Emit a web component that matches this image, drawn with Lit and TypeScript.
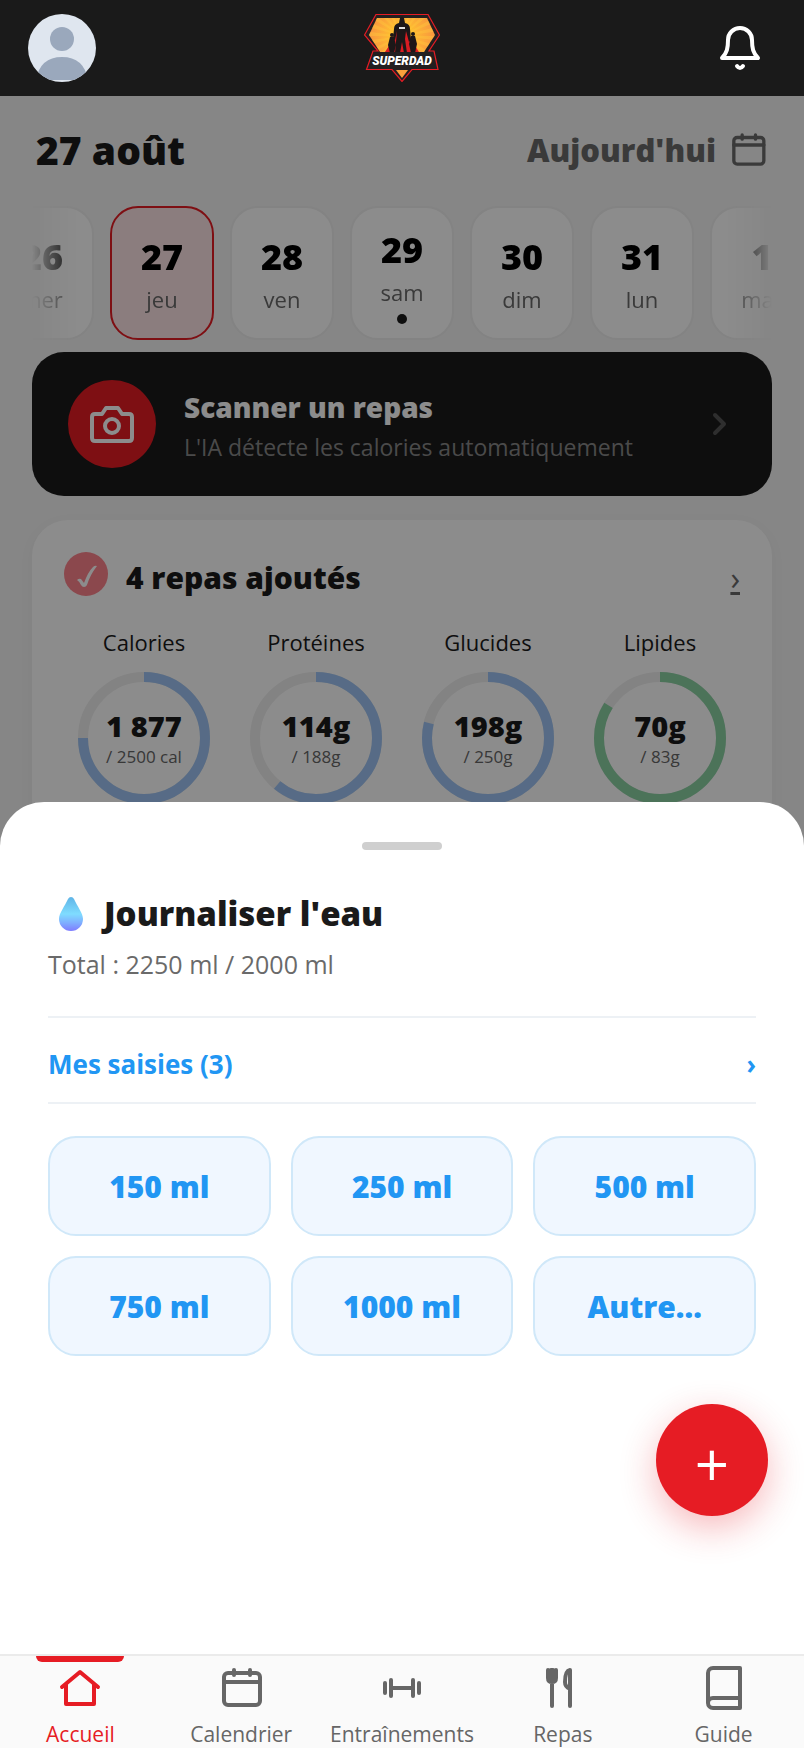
import { css, html, LitElement, svg } from "lit";
import { customElement, property, state } from "lit/decorators.js";
import { classMap } from "lit/directives/class-map.js";

const icons = {
    home: svg`<path d="M6 23 24 8l18 15M10 20v20h28V20" />`,
    calendar: svg`<rect x="7" y="9" width="36" height="32" rx="4" /><path d="M7 18h36M17 6v5M33 6v5" />`,
    dumbbell: svg`<path d="M7 19v10M13 16v16M13 24h22M35 16v16M41 19v10" />`,
    cutlery: svg`<path d="M9 6v8q0 4 4 4t4-4V6M13 6v36M12 6v8M14 6v8" /><path d="M31 42V6q-5 1-5 12 0 5 5 7" />`,
    book: svg`<path d="M40 4H13a5 5 0 0 0-5 5v30a5 5 0 0 0 5 5h27zM8 39a5 5 0 0 1 5-5h27" />`,
    bell: svg`<path d="M6 34c5-5 6-10 6-18a12 12 0 0 1 24 0c0 8 1 13 6 18z" /><path d="M21 42q3 4 6 0" />`,
    camera: svg`<path d="M7 14h7l4-6h12l4 6h7q3 0 3 3v21q0 3-3 3H7q-3 0-3-3V17q0-3 3-3z" /><circle cx="24" cy="26" r="7" />`,
};

@customElement("app-icon")
class AppIconElement extends LitElement {
    @property()
    name: keyof typeof icons = "home";

    render() {
        return html`<svg viewBox="0 0 48 48" aria-hidden="true">${icons[this.name]}</svg>`;
    }

    static styles = css`
      :host {
        display: inline-flex;
        width: 48px;
        height: 48px;
      }
      svg {
        width: 100%;
        height: 100%;
        fill: none;
        stroke: currentColor;
        stroke-width: 4;
        stroke-linecap: round;
        stroke-linejoin: round;
      }
    `;
}

@customElement("superdad-logo")
class SuperdadLogoElement extends LitElement {
    render() {
        const rays = Array.from({ length: 24 }, (_, i) => {
            const a = (i * Math.PI) / 12;
            const b = a + Math.PI / 24;
            return `M38 22L${38 + 50 * Math.cos(a)} ${22 + 50 * Math.sin(a)}L${38 + 50 * Math.cos(b)} ${22 + 50 * Math.sin(b)}z`;
        }).join("");
        return html`
      <svg viewBox="0 0 76 68" role="img" aria-label="Superdad">
        <defs>
          <radialGradient id="sun" cx="38" cy="22" r="34" gradientUnits="userSpaceOnUse">
            <stop offset="0" stop-color="#ffd21f" />
            <stop offset="0.5" stop-color="#fdb236" />
            <stop offset="1" stop-color="#f7943f" />
          </radialGradient>
          <clipPath id="gem"><path d="M13 4h50l8 17-13 20H18L5 21z" /></clipPath>
        </defs>
        <path
          d="M12 .5h52L75.500 21 65 37h5l4 18.500H48L38 67.500 28 55.500H2.500L9 37h5L.5 21z"
          fill="#231f20" stroke="#e61c24" stroke-width="1.200"
        />
        <path d="M13 4h50l8 17-13 20H18L5 21z" fill="url(#sun)" />
        <path d=${rays} fill="#ffc83d" opacity="0.4" clip-path="url(#gem)" />
        <path d="M33 11q-2 13-12 27h34Q45 24 43 11z" fill="#d91c22" />
        <path d="M36 4q2-3 4 0l1 5q5 1 5 6l1 11-2 2-3-11-1 8 2 14h-3l-2-11-2 11h-5l2-22-2 9-2-1 1-10q0-5 5-6z" fill="#1c1718" />
        <path d="M35 13h6v2h-6z" fill="#ddd" />
        <circle cx="28" cy="21" r="2" fill="#1c1718" />
        <path d="M26 23h4l2 8-2 8h-4l-2-8z" fill="#1c1718" />
        <circle cx="49" cy="20" r="2" fill="#1c1718" />
        <path d="M47 22h4l2 8-2 9h-4l-2-9z" fill="#1c1718" />
        <path d="M10 38h57l4 16H5z" fill="#231f20" />
        <path d="M32 56h12l-6 8z" fill="#f9a13c" />
        <text class="word" x="38" y="51" text-anchor="middle">SUPERDAD</text>
      </svg>`;
    }

    static styles = css`
      :host {
        display: inline-flex;
        width: 76px;
        height: 68px;
      }
      svg {
        width: 100%;
        height: 100%;
      }
      .word {
        font: italic 900 12px Roboto, sans-serif;
        fill: #fff;
      }
    `;
}

@customElement("macro-ring")
class MacroRingElement extends LitElement {
    @property()
    label = "";

    @property()
    value = "";

    @property()
    goal = "";

    @property({ type: Number })
    percent = 0;

    @property()
    color = "#9ec4f4";

    render() {
        return html`
      <span class="label">${this.label}</span>
      <div class="ring">
        <svg viewBox="0 0 132 132" aria-hidden="true">
          <circle cx="66" cy="66" r="61" stroke="#eee" />
          <circle
            cx="66" cy="66" r="61" pathLength="100" stroke=${this.color}
            stroke-dasharray="${this.percent} 100" transform="rotate(-90 66 66)"
          />
        </svg>
        <div class="center">
          <strong>${this.value}</strong>
          <small>/ ${this.goal}</small>
        </div>
      </div>`;
    }

    static styles = css`
      :host {
        display: flex;
        flex-direction: column;
        align-items: center;
        gap: 14px;
      }
      .label {
        font-size: 22px;
        line-height: 32px;
      }
      .ring {
        display: grid;
        place-items: center;
        width: 132px;
        height: 132px;
      }
      .ring > * {
        grid-area: 1 / 1;
      }
      svg {
        width: 100%;
        height: 100%;
        fill: none;
        stroke-width: 10;
      }
      .center {
        display: flex;
        flex-direction: column;
        align-items: center;
      }
      strong {
        font-size: 29px;
        font-weight: 800;
        line-height: 38px;
      }
      small {
        color: #666;
        font-size: 17px;
        line-height: 24px;
      }
    `;
}

@customElement("app-root")
class AppRootElement extends LitElement {
    @state()
    selected = 27;

    days = [
        { num: 26, name: "mer" },
        { num: 27, name: "jeu" },
        { num: 28, name: "ven" },
        { num: 29, name: "sam", dot: true },
        { num: 30, name: "dim" },
        { num: 31, name: "lun" },
        { num: 1, name: "mar" },
    ];

    macros = [
        { label: "Calories", value: "1 877", goal: "2500 cal", percent: 75, color: "#9ec4f4" },
        { label: "Protéines", value: "114g", goal: "188g", percent: 61, color: "#9ec4f4" },
        { label: "Glucides", value: "198g", goal: "250g", percent: 79, color: "#9ec4f4" },
        { label: "Lipides", value: "70g", goal: "83g", percent: 84, color: "#8ad1a2" },
    ];

    amounts = ["150 ml", "250 ml", "500 ml", "750 ml", "1000 ml", "Autre..."];

    tabs = [
        { label: "Accueil", icon: "home" },
        { label: "Calendrier", icon: "calendar" },
        { label: "Entraînements", icon: "dumbbell" },
        { label: "Repas", icon: "cutlery" },
        { label: "Guide", icon: "book" },
    ];

    render() {
        return html`
      <header>
        <button class="avatar" aria-label="Profil">
          <svg viewBox="0 0 68 68" aria-hidden="true">
            <circle cx="34" cy="25" r="12" fill="#9aa8bc" />
            <path d="M8 66Q12 43 34 43T60 66z" fill="#9aa8bc" />
          </svg>
        </button>
        <superdad-logo></superdad-logo>
        <button class="bell" aria-label="Notifications"><app-icon name="bell"></app-icon></button>
      </header>

      <main>
        <div class="heading">
          <h1>27 août</h1>
          <button class="today">Aujourd'hui <app-icon name="calendar"></app-icon></button>
        </div>

        <div class="days">
          ${this.days.map((day) => html`
            <button
              class=${classMap({ day: true, selected: day.num === this.selected })}
              @click=${() => (this.selected = day.num)}
            >
              <strong>${day.num}</strong>
              <span>${day.name}</span>
              ${day.dot ? html`<i class="dot"></i>` : ""}
            </button>`)}
        </div>

        <button class="scanner">
          <span class="camera"><app-icon name="camera"></app-icon></span>
          <span class="scanner-text">
            <strong>Scanner un repas</strong>
            <span>L'IA détecte les calories automatiquement</span>
          </span>
          <svg class="chevron" viewBox="0 0 16 24" aria-hidden="true"><path d="m3 3 9 9-9 9" /></svg>
        </button>

        <section class="meals">
          <div class="meals-head">
            <svg class="check" viewBox="0 0 44 44" aria-hidden="true">
              <circle cx="22" cy="22" r="22" fill="#fd838c" />
              <path d="M13 28q2-2 4-1l3 4q4-11 9-16 2-2 4-1-7 9-10 19-1 2-3 2t-3-2q-1-3-4-5z" fill="#fff" />
            </svg>
            <h2>4 repas ajoutés</h2>
            <a href="#repas" aria-label="Voir les repas">›</a>
          </div>
          <div class="macros">
            ${this.macros.map((m) => html`
              <macro-ring
                .label=${m.label} .value=${m.value} .goal=${m.goal}
                .percent=${m.percent} .color=${m.color}
              ></macro-ring>`)}
          </div>
        </section>
      </main>

      <div class="overlay"></div>

      <section class="sheet" role="dialog" aria-labelledby="water-title">
        <div class="handle"></div>
        <h2 id="water-title">
          <svg class="drop" viewBox="0 0 46 36" aria-hidden="true">
            <defs>
              <linearGradient id="water" x1="0" y1="0" x2="0" y2="1">
                <stop offset="0" stop-color="#5fb4e6" />
                <stop offset="0.5" stop-color="#7fdcff" />
                <stop offset="0.750" stop-color="#7fb0ff" />
                <stop offset="1" stop-color="#7f7cff" />
              </linearGradient>
            </defs>
            <path d="M23 1q2 0 3 2c3 7 9 14 9 20a12 12 0 0 1-24 0c0-6 6-13 9-20q1-2 3-2z" fill="url(#water)" />
          </svg>
          Journaliser l'eau
        </h2>
        <p class="total">Total : 2250 ml / 2000 ml</p>
        <button class="entries"><span>Mes saisies (3)</span><span>›</span></button>
        <div class="amounts">
          ${this.amounts.map((a) => html`<button>${a}</button>`)}
        </div>
      </section>

      <button class="fab" aria-label="Ajouter">+</button>

      <nav>
        ${this.tabs.map((tab, i) => html`
          <a href="#${tab.icon}" class=${classMap({ active: i === 0 })}>
            <app-icon name=${tab.icon}></app-icon>
            <span>${tab.label}</span>
          </a>`)}
      </nav>`;
    }

    static styles = css`
      :host {
        display: block;
        min-height: 100vh;
        background: #f4f4f4;
        color: #1a1a1a;
        font-family: "Open Sans", "Noto Sans", sans-serif;
      }
      * {
        box-sizing: border-box;
      }
      button {
        border: 0;
        padding: 0;
        background: none;
        color: inherit;
        font: inherit;
        cursor: pointer;
      }
      h1, h2, p {
        margin: 0;
      }
      h1, h2, strong {
        font-weight: 800;
      }
      header {
        position: sticky;
        top: 0;
        z-index: 3;
        display: grid;
        grid-template-columns: 1fr auto 1fr;
        align-items: center;
        padding: 14px 28px;
        background: #1a1a1a;
        color: #fff;
      }
      .avatar {
        width: 68px;
        height: 68px;
        border-radius: 50%;
        overflow: hidden;
        background: #dfe6ef;
      }
      .avatar svg {
        display: block;
      }
      .bell {
        display: flex;
        justify-self: end;
        padding: 10px 12px;
      }
      main {
        padding: 24px 32px 0;
      }
      .heading {
        display: flex;
        align-items: center;
        justify-content: space-between;
        height: 60px;
        margin-bottom: 26px;
        padding: 0 4px;
      }
      h1 {
        font-size: 39px;
        line-height: 60px;
      }
      .today {
        display: flex;
        align-items: center;
        gap: 12px;
        color: #6a6a6a;
        font-size: 31px;
        font-weight: 800;
      }
      .today app-icon {
        width: 40px;
        height: 40px;
      }
      .days {
        display: flex;
        justify-content: center;
        gap: 16px;
        overflow: hidden;
        margin-bottom: 12px;
        mask-image: linear-gradient(90deg, transparent, #000 48px, #000 calc(100% - 48px), transparent);
      }
      .day {
        display: flex;
        flex: 0 0 104px;
        flex-direction: column;
        align-items: center;
        justify-content: center;
        height: 134px;
        padding-top: 4px;
        border: 2px solid #eee;
        border-radius: 28px;
        background: #fff;
      }
      .day strong {
        color: #000;
        font-size: 36px;
        line-height: 48px;
      }
      .day span {
        color: #6a6a6a;
        font-size: 22px;
        line-height: 36px;
      }
      .selected {
        border-color: #e61c24;
        background: #fde4e5;
      }
      .dot {
        width: 10px;
        height: 10px;
        margin-top: 4px;
        border-radius: 50%;
        background: #1a1a1a;
      }
      .scanner {
        display: flex;
        align-items: center;
        gap: 28px;
        width: 100%;
        padding: 28px 44px 28px 36px;
        border-radius: 32px;
        background: #1a1a1a;
        color: #fff;
        text-align: left;
      }
      .camera {
        display: grid;
        flex: none;
        place-items: center;
        width: 88px;
        height: 88px;
        border-radius: 50%;
        background: #e61c24;
      }
      .scanner-text {
        display: flex;
        flex: 1;
        flex-direction: column;
        gap: 2px;
        padding-top: 4px;
      }
      .scanner-text strong {
        font-size: 28px;
        line-height: 40px;
      }
      .scanner-text span {
        color: #888;
        font-size: 23px;
        line-height: 36px;
      }
      .chevron {
        width: 16px;
        height: 24px;
        fill: none;
        stroke: #555;
        stroke-width: 4;
        stroke-linecap: round;
        stroke-linejoin: round;
      }
      .meals {
        margin-top: 24px;
        padding: 32px;
        border-radius: 36px;
        background: #fff;
        box-shadow: 0 4px 16px rgba(0, 0, 0, 0.04);
      }
      .meals-head {
        display: flex;
        align-items: flex-start;
        gap: 18px;
        margin-bottom: 22px;
      }
      .meals-head h2 {
        flex: 1;
        font-size: 30px;
        line-height: 52px;
      }
      .meals-head a {
        color: #6a6a6a;
        font-size: 32px;
        line-height: 52px;
      }
      .check {
        width: 44px;
        height: 44px;
      }
      .macros {
        display: grid;
        grid-template-columns: repeat(4, 132px);
        justify-content: center;
        gap: 40px;
      }
      .overlay {
        position: fixed;
        inset: 0;
        z-index: 1;
        background: rgba(0, 0, 0, 0.45);
      }
      .sheet {
        position: fixed;
        right: 0;
        bottom: 0;
        left: 0;
        z-index: 2;
        padding: 40px 48px 392px;
        border-radius: 44px 44px 0 0;
        background: #fff;
      }
      .handle {
        width: 80px;
        height: 8px;
        margin: 0 auto 40px;
        border-radius: 4px;
        background: #cfcfcf;
      }
      .sheet h2 {
        display: flex;
        align-items: center;
        gap: 10px;
        font-size: 33px;
        line-height: 48px;
      }
      .drop {
        width: 46px;
        height: 36px;
      }
      .total {
        margin: 4px 0 30px;
        color: #6a6a6a;
        font-size: 25px;
        line-height: 44px;
      }
      .entries {
        display: flex;
        align-items: center;
        justify-content: space-between;
        width: 100%;
        height: 88px;
        margin-bottom: 32px;
        padding-top: 8px;
        border: solid #edf1f5;
        border-width: 2px 0;
        color: #2196f3;
        font-size: 26px;
        font-weight: 700;
      }
      .amounts {
        display: grid;
        grid-template-columns: repeat(3, 1fr);
        gap: 20px;
      }
      .amounts button {
        height: 100px;
        border: 2px solid #d0e8f9;
        border-radius: 28px;
        background: #f0f7ff;
        color: #2196f3;
        font-size: 30px;
        font-weight: 800;
      }
      .fab {
        position: fixed;
        right: 36px;
        bottom: 232px;
        z-index: 3;
        width: 112px;
        height: 112px;
        padding-top: 8px;
        border-radius: 50%;
        background: #e61c24;
        box-shadow: 0 12px 36px rgba(230, 28, 36, 0.3);
        color: #fff;
        font-size: 60px;
        line-height: 104px;
      }
      nav {
        position: fixed;
        right: 0;
        bottom: 0;
        left: 0;
        z-index: 3;
        display: grid;
        grid-template-columns: repeat(5, 1fr);
        border-top: 2px solid #ebebeb;
        background: #fafafa;
      }
      nav a {
        position: relative;
        display: flex;
        flex-direction: column;
        align-items: center;
        gap: 8px;
        padding-top: 8px;
        color: #666;
        font-size: 21px;
        font-weight: 500;
        line-height: 28px;
        text-decoration: none;
      }
      nav .active {
        color: #e61c24;
      }
      .active::before {
        content: "";
        position: absolute;
        top: 0;
        width: 88px;
        height: 6px;
        border-radius: 0 0 6px 6px;
        background: #e61c24;
      }
    `;
}
